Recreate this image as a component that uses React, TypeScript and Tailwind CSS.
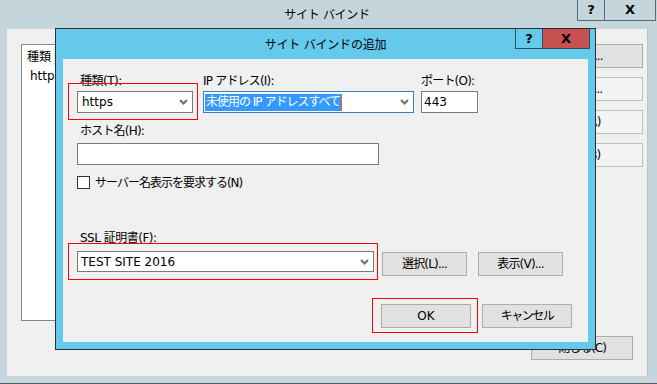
import React from 'react';

function Chevron() {
  return (
    <svg width="9" height="6" viewBox="0 0 9 6" className="shrink-0">
      <path d="M1 1 L4.5 4.5 L8 1" fill="none" stroke="#6d6d6d" strokeWidth="2" />
    </svg>
  );
}

function Button({ label, className = '' }: { label: string; className?: string }) {
  return (
    <div
      className={`h-[24px] bg-[#e1e1e1] border border-[#adadad] flex items-center justify-center text-[12px] text-black ${className}`}
    >
      {label}
    </div>
  );
}

export default function App() {
  return (
    <div className="relative w-[657px] h-[384px] overflow-hidden bg-[#c4d6dc] font-['DejaVu_Sans','Noto_Sans_CJK_JP',sans-serif] text-black">
      {/* Outer window: title bar */}
      <div className="h-[29px] flex items-center justify-center pl-[7px] pr-[10px] text-[12px] tracking-[-0.3px]">サイト バインド</div>
      <div className="absolute top-0 left-[577px] flex h-[21px] border-b border-l border-[#5b6a70]">
        <div className="w-[27px] flex items-center justify-center font-bold text-[13px] border-r border-[#5b6a70]">?</div>
        <div className="w-[51px] flex items-center justify-center font-bold text-[13px] border-r border-[#5b6a70]">X</div>
      </div>

      {/* Outer window: client area */}
      <div className="absolute left-[7px] top-[29px] w-[641px] h-[347px] bg-[#f0f0f0] border-r border-[#b9c5c9]">
        <div className="flex pl-[14px] pt-[15px]">
          <div className="w-[510px] h-[277px] bg-white border border-[#828790] p-[2px]">
            <div className="flex h-[19px] items-center">
              <div className="w-[31px] h-[19px] bg-[#fcfcfc] border-r border-[#e5e5e5] flex items-center pl-[3px] text-[12px]">種類</div>
            </div>
            <div className="pl-[6px] pt-[2px] text-[12px] leading-[16px]">http</div>
          </div>
          <div className="flex flex-col gap-[9px] ml-[10px] w-[102px]">
            <Button label="追加(A)..." className="border-[#3c7fb1] bg-[#dddddd] pr-[24px] tracking-[-1px]" />
            <Button label="編集(E)..." className="bg-[#f4f4f4] border-[#bfbfbf] text-[#a0a0a0] pr-[24px] tracking-[-1px]" />
            <Button label="削除(R)" className="bg-[#f4f4f4] border-[#bfbfbf] text-[#a0a0a0] pr-[20px] tracking-[-1px]" />
            <Button label="参照(B)" className="bg-[#f4f4f4] border-[#bfbfbf] text-[#a0a0a0] pr-[20px] tracking-[-1px]" />
          </div>
        </div>
        <div className="flex justify-end pr-[14px] mt-[15px]">
          <Button label="閉じる(C)" className="w-[102px] tracking-[-1px]" />
        </div>
      </div>

      {/* Dialog: サイト バインドの追加 */}
      <div className="absolute left-[55px] top-[28px] w-[541px] h-[322px] border border-[#2f2f2f] bg-[#65c9eb] flex flex-col">
        <div className="relative h-[30px] flex items-center justify-center text-[12px] pt-[2px] tracking-[-0.2px]">
          サイト バインドの追加
          <div className="absolute top-0 right-[5px] flex h-[20px] border-l border-b border-r border-[#2f4f5f] tracking-normal">
            <div className="w-[27px] flex items-center justify-center font-bold text-[13px] border-r border-[#2f4f5f]">?</div>
            <div className="w-[46px] flex items-center justify-center font-bold text-[13px] bg-[#c75050]">X</div>
          </div>
        </div>
        <div className="relative mx-[7px] mb-[7px] flex-1 bg-[#f0f0f0] pl-[14px] pt-[14px] text-[12px]">
          {/* row 1 */}
          <div className="flex">
            <div className="w-[116px]">
              <div className="h-[16px] leading-[16px] pl-[3px] mb-[2px] tracking-[-0.5px]">種類(T):</div>
              <div className="h-[22px] bg-white border border-[#7a7a7a] flex items-center justify-between pl-[4px] pr-[4px]">
                <span>https</span>
                <Chevron />
              </div>
            </div>
            <div className="w-[211px] ml-[10px]">
              <div className="h-[16px] leading-[16px] mb-[2px] tracking-[-0.8px]">IP アドレス(I):</div>
              <div className="h-[22px] bg-white border border-[#3c7fb1] flex items-center justify-between pl-[1px] pr-[4px]">
                <span className="bg-[#3399ff] text-white leading-[17px] px-[1px] border-r border-[#d0700a] tracking-[-1px]">未使用の IP アドレスすべて</span>
                <Chevron />
              </div>
            </div>
            <div className="w-[57px] ml-[7px]">
              <div className="h-[16px] leading-[16px] mb-[2px] tracking-[-0.8px]">ポート(O):</div>
              <div className="h-[22px] bg-white border border-[#7a7a7a] flex items-center pl-[2px]">443</div>
            </div>
          </div>

          {/* host */}
          <div className="h-[16px] leading-[16px] pl-[3px] mt-[10px] mb-[4px] tracking-[-0.8px]">ホスト名(H):</div>
          <div className="w-[302px] h-[22px] bg-white border border-[#7a7a7a]" />

          <div className="flex items-center mt-[11px] h-[13px]">
            <div className="w-[13px] h-[13px] bg-white border border-[#333333]" />
            <span className="ml-[5px] tracking-[-1px]">サーバー名表示を要求する(N)</span>
          </div>

          {/* SSL */}
          <div className="h-[16px] leading-[16px] pl-[3px] mt-[41px] mb-[5px] tracking-[-0.5px]">SSL 証明書(F):</div>
          <div className="flex items-start">
            <div className="w-[297px] h-[21px] bg-white border border-[#7a7a7a] flex items-center justify-between pl-[3px] pr-[4px]">
              <span>TEST SITE 2016</span>
              <Chevron />
            </div>
            <Button label="選択(L)..." className="w-[85px] h-[23px] ml-[8px] mt-[1px] tracking-[-0.8px]" />
            <Button label="表示(V)..." className="w-[85px] h-[23px] ml-[11px] mt-[1px] tracking-[-0.8px]" />
          </div>

          <div className="flex justify-end gap-[11px] pr-[16px] mt-[28px]">
            <Button label="OK" className="w-[90px] border-[#3c7fb1]" />
            <Button label="キャンセル" className="w-[90px] tracking-[-1.5px]" />
          </div>

          {/* annotation boxes */}
          <div className="absolute left-[5px] top-[24px] w-[130px] h-[37px] border border-[#ff0000]" />
          <div className="absolute left-[5px] top-[184px] w-[310px] h-[37px] border border-[#ff0000]" />
          <div className="absolute left-[309px] top-[239px] w-[106px] h-[35px] border border-[#ff0000]" />
        </div>
      </div>

      {/* bottom window edge */}
      <div className="absolute left-0 right-0 bottom-0 h-[1px] bg-[#5a5a5a]" />
    </div>
  );
}
